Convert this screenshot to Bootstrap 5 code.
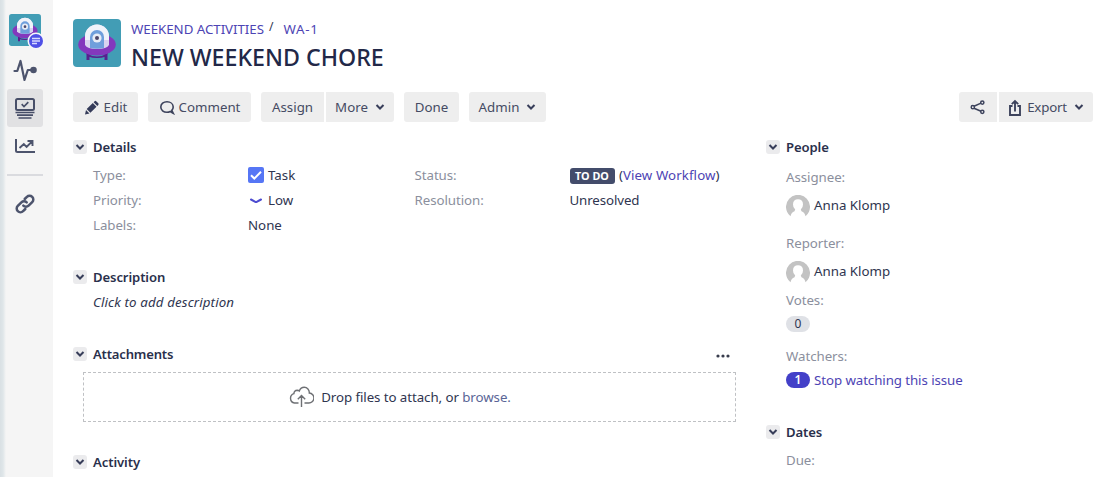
<!DOCTYPE html>
<html lang="en">
<head>
<meta charset="utf-8">
<title>WA-1 New weekend chore</title>
<link href="https://cdn.jsdelivr.net/npm/bootstrap@5.3.0/dist/css/bootstrap.min.css" rel="stylesheet">
<style>
body{font-family:"Noto Sans","Open Sans",sans-serif;font-size:13.3px;line-height:20px;color:#2f3550;height:477px;overflow:hidden;background:#fff}
a{color:#4d44b4;text-decoration:none}
svg{display:block;flex:none}
.side{width:53px;height:477px;flex:none;padding:14px 10px 0 7px;background:linear-gradient(90deg,#d9e0e4 0,#dfe6e9 3px,#f5f5f5 6px)}
.side-item{height:38px;width:36px}
.side-item.on{background:#e1e1e3;border-radius:3px}
.side-rule{height:2px;width:36px;background:#dadbdf}
.main-area{padding:19px 1px 0 20px;min-width:0}
.crumbs{font-size:13.3px;height:20px;white-space:pre}
.issue-title{font-size:23.2px;font-weight:500;line-height:30px;margin:3px 0 0;color:#222848}
.tool{--bs-btn-bg:#eee;--bs-btn-color:#454b63;--bs-btn-border-width:0;--bs-btn-padding-x:0;--bs-btn-padding-y:0;--bs-btn-font-size:13.3px;--bs-btn-border-radius:3px;height:30px;display:flex;align-items:center;justify-content:center;line-height:20px;white-space:nowrap}
.tools{margin-top:20px;gap:10px}
.btn-group{gap:2px}
.btn-group>.btn.tool{flex:none}
.sec{font-size:13.1px;font-weight:600;line-height:20px;height:20px;margin:0;gap:6px;color:#2a304c;letter-spacing:-.1px}
.chev{width:14px;height:14px;border-radius:3px;background:#ebebed}
.lbl{color:#8b8f9d;letter-spacing:-.06px}
.left-col{width:663px;flex:none}
.facts{display:grid;grid-template-columns:155px 166.5px 155px 1fr;grid-auto-rows:25px;align-items:center;margin:5px 0 0 20px}
.status{background:#434c6b;color:#fff;border-radius:3px;font-size:10.8px;font-weight:700;line-height:16px;width:45px;text-align:center;display:inline-block;margin-right:1px}
.drop{border:1px dashed #bfc1c4;height:50px;margin:8px 0 0 10px;padding-right:19px}
.right-col{margin-left:30px}
.right-body{padding-left:20px}
.count{width:24px;height:16px;border-radius:8px;background:#dfe1e6;font-size:12px;line-height:16px;text-align:center}
.count.mine{background:#4340c8;color:#fff;font-weight:600}
</style>
</head>
<body>
<svg width="0" height="0" class="position-absolute">
<defs>
<symbol id="ufo" viewBox="0 0 48 48">
<rect width="48" height="48" rx="4" fill="#429db5"/>
<path d="M13.500 33h3v8h-3zM31.500 33h3v8h-3z" fill="#57208f"/>
<path d="M13 34q11 7 22 0l-2 3.500q-9 3-18 0z" fill="#57208f"/>
<ellipse cx="24" cy="25.500" rx="18.800" ry="11" fill="#8338bd"/>
<path d="M12 26V17.500a12 12 0 0 1 24 0V26q-2 4-12 4t-12-4z" fill="#d9d3f0"/>
<path d="M12 21V17.500a12 12 0 0 1 24 0V21z" fill="#f0f3fa"/>
<path d="M17 29V18a7 7 0 0 1 14 0v11q-7 1.500-14 0z" fill="#6f9fdc"/>
<circle cx="24" cy="19" r="4.600" fill="#e8edf6"/><circle cx="24" cy="19" r="2" fill="#4d4668"/>
</symbol>
<symbol id="down" viewBox="0 0 10 8"><path d="M1.500 2 5 5.500 8.500 2" fill="none" stroke="#383e5a" stroke-width="2"/></symbol>
<symbol id="person" viewBox="0 0 24 24">
<path d="M4.500 21.200A12 12 0 1 1 19.500 21.200Q18.700 17.300 15.500 16.200L14.800 14.600Q17 12.800 17 9.400C17 6 15 4.300 12 4.300S7 6 7 9.400Q7 12.800 9.200 14.600L8.500 16.200Q5.300 17.300 4.500 21.200z" fill="#c3c3c3"/>
</symbol>
</defs>
</svg>
<div class="d-flex">
<nav class="side">
<div class="position-relative" style="height:37px">
<svg width="32" height="32" style="margin-left:2px"><use href="#ufo"/></svg>
<svg class="position-absolute" style="left:20px;top:18px" width="18" height="18" viewBox="0 0 18 18"><circle cx="9" cy="9" r="8.500" fill="#f7f7fa"/><circle cx="9" cy="9" r="7" fill="#4f50e6"/><path d="M5 6.500h8M5 9h8M5 11.500h5" stroke="#d9daff" stroke-width="1.400"/></svg>
</div>
<div class="side-item d-flex align-items-center justify-content-center"><svg width="24" height="24" viewBox="0 0 24 24" fill="none" stroke="#4d546d" stroke-width="2.200" stroke-linecap="round" stroke-linejoin="round"><path d="M1.500 13h2.800L7.500 3l4 19 3.300-10H21"/><circle cx="20.500" cy="12" r="2.200" fill="#4d546d"/></svg></div>
<div class="side-item on d-flex align-items-center justify-content-center"><svg width="22" height="22" viewBox="0 0 22 22" fill="none" stroke="#474e68" stroke-width="2"><rect x="2" y="2" width="18" height="11" rx="1.500"/><path d="m7.700 7.200 2.300 2.300 4.300-4.300" stroke-width="1.700"/><path d="M1.500 15.500h19M3 18.200h16M4.500 21h13" stroke-width="1.700"/></svg></div>
<div class="side-item d-flex align-items-center justify-content-center"><svg width="22" height="18" viewBox="0 0 22 18" fill="none" stroke="#4d546d" stroke-width="2"><path d="M2 2v11.500q0 1.500 1.500 1.500H21"/><path d="m5.500 11 4.300-4 2.800 3 5.400-5.500M13.500 4h5v5" stroke-width="1.900"/></svg></div>
<div class="side-rule" style="margin-top:9px"></div>
<div class="d-flex justify-content-center" style="margin-top:18px"><svg width="20" height="20" viewBox="0 0 20 20" fill="none" stroke="#4d546d" stroke-width="2.500" stroke-linecap="round"><path d="M8.300 11.700a3.700 3.700 0 0 0 5.300 0l3.600-3.600a3.700 3.700 0 0 0-5.300-5.300L9.700 5"/><path d="M11.700 8.300a3.700 3.700 0 0 0-5.300 0l-3.600 3.600a3.700 3.700 0 0 0 5.300 5.300l2.200-2.200"/></svg></div>
</nav>

<main class="main-area flex-grow-1">
<header class="d-flex">
<svg width="48" height="48"><use href="#ufo"/></svg>
<div style="margin-left:10px">
<div class="crumbs d-flex"><a href="#" style="letter-spacing:-.04px">WEEKEND ACTIVITIES</a><span style="margin:-2px 10px 0 5px;font-size:12px">/</span><a href="#" style="letter-spacing:.7px">WA-1</a></div>
<h1 class="issue-title">NEW WEEKEND CHORE</h1>
</div>
</header>

<div class="tools d-flex">
<button class="btn tool" style="width:65px"><svg style="margin-right:5px" width="15" height="15" viewBox="0 0 15 15" fill="#343b59"><path d="m1 14.500 1-4.500 3.500 3.500zM2.700 9.100 8.800 3l3.700 3.700-6.100 6.100zM9.600 2.200l1-1q.8-.7 1.600 0l2.100 2.100q.7.800 0 1.600l-1 1z"/></svg>Edit</button>
<button class="btn tool" style="width:103px"><svg class="me-1" width="16" height="16" viewBox="0 0 16 16" fill="none" stroke="#3d435c" stroke-width="1.600"><path d="M14.200 14.200 11.200 12.500Q9.700 13.300 8 13.300C4.500 13.300 1.800 11.100 1.800 8S4.500 2.800 8 2.800s6.200 2.200 6.200 5.200q0 1.900-1.400 3.400z"/></svg>Comment</button>
<div class="btn-group"><button class="btn tool" style="width:63px">Assign</button><button class="btn tool ms-0" style="width:68px">More<svg style="margin-left:7px" width="10" height="8"><use href="#down"/></svg></button></div>
<button class="btn tool" style="width:55px">Done</button>
<button class="btn tool" style="width:77px">Admin<svg style="margin-left:7px" width="10" height="8"><use href="#down"/></svg></button>
<div class="btn-group ms-auto"><button class="btn tool" style="width:38px" aria-label="Share"><svg width="16" height="16" viewBox="0 0 16 16" fill="none" stroke="#3d435c" stroke-width="1.500"><path d="m4 7.300 7-3.200M4 9.200l7 3"/><circle cx="2.800" cy="8.200" r="1.600"/><circle cx="12.300" cy="3.600" r="1.600"/><circle cx="12.300" cy="12.800" r="1.600"/></svg></button><button class="btn tool ms-0" style="width:94px"><svg style="margin-right:5px" width="14" height="17" viewBox="0 0 14 17" fill="none" stroke="#3d435c" stroke-width="1.900"><path d="M4.500 7H2v9h10V7H9.500M7 12.500V2.500M3.800 5.200 7 2l3.200 3.200"/></svg><span style="letter-spacing:-.2px">Export</span><svg style="margin-left:7px" width="10" height="8"><use href="#down"/></svg></button></div>
</div>

<div class="d-flex" style="margin-top:15px">
<section class="left-col">
<h2 class="sec d-flex align-items-center"><span class="chev d-flex align-items-center justify-content-center"><svg width="10" height="8"><use href="#down"/></svg></span><span>Details</span></h2>
<div class="facts">
<span class="lbl">Type:</span><span class="d-flex align-items-center"><svg class="me-1" width="16" height="16" viewBox="0 0 16 16"><rect width="16" height="16" rx="2" fill="#5676f5"/><path d="m3 8.200 3.300 3.300L13 4.800" fill="none" stroke="#fff" stroke-width="2"/></svg>Task</span>
<span class="lbl">Status:</span><span><span class="status">TO DO</span> (<a href="#" style="letter-spacing:.08px">View Workflow</a>)</span>
<span class="lbl">Priority:</span><span class="d-flex align-items-center"><svg class="me-1" width="16" height="16" viewBox="0 0 16 16"><path d="M3 7.500 7.300 9.800q.7.400 1.400 0L13 7.500" fill="none" stroke="#4c4bd0" stroke-width="2" stroke-linecap="round"/></svg>Low</span>
<span class="lbl">Resolution:</span><span style="letter-spacing:-.1px">Unresolved</span>
<span class="lbl">Labels:</span><span>None</span>
</div>
<h2 class="sec d-flex align-items-center" style="margin-top:30px"><span class="chev d-flex align-items-center justify-content-center"><svg width="10" height="8"><use href="#down"/></svg></span><span>Description</span></h2>
<div class="fst-italic" style="margin:5px 0 0 20px;letter-spacing:.13px">Click to add description</div>
<h2 class="sec d-flex align-items-center" style="margin-top:32px"><span class="chev d-flex align-items-center justify-content-center"><svg width="10" height="8"><use href="#down"/></svg></span><span style="letter-spacing:-.2px">Attachments</span><svg class="ms-auto" style="margin-right:6px;margin-top:4px" width="14" height="4" viewBox="0 0 14 4" fill="#383c4c"><circle cx="2" cy="2" r="1.600"/><circle cx="7" cy="2" r="1.600"/><circle cx="12" cy="2" r="1.600"/></svg></h2>
<div class="drop d-flex align-items-center justify-content-center"><svg style="margin-right:7px" width="25" height="22" viewBox="0 0 25 22" fill="none" stroke="#6e7074" stroke-width="1.400"><path d="M9.500 17H5.500a4.800 4.800 0 0 1-.6-9.300Q5 4.500 8.300 4.300q1.300 0 2 .7C11.500 2 13 1.300 15.200 1.300c3 0 5.300 2.400 5.100 5.700A5 5 0 0 1 19.500 17H15.500M12.500 21V9.500M8.800 13.200l3.700-3.700 3.700 3.700"/></svg><span style="letter-spacing:-.07px">Drop files to attach, or <a href="#" style="color:#5a6596">browse.</a></span></div>
<h2 class="sec d-flex align-items-center" style="margin-top:30px"><span class="chev d-flex align-items-center justify-content-center"><svg width="10" height="8"><use href="#down"/></svg></span><span>Activity</span></h2>
</section>

<aside class="right-col flex-grow-1">
<h2 class="sec d-flex align-items-center"><span class="chev d-flex align-items-center justify-content-center"><svg width="10" height="8"><use href="#down"/></svg></span><span>People</span></h2>
<div class="right-body">
<div class="lbl" style="margin-top:10px">Assignee:</div>
<div class="d-flex" style="margin-top:8px;height:38px;gap:4px"><svg width="24" height="24"><use href="#person"/></svg><span>Anna Klomp</span></div>
<div class="lbl">Reporter:</div>
<div class="d-flex" style="margin-top:8px;height:29px;gap:4px"><svg width="24" height="24"><use href="#person"/></svg><span>Anna Klomp</span></div>
<div class="lbl">Votes:</div>
<div class="count" style="margin-top:6px">0</div>
<div class="lbl" style="margin-top:14px">Watchers:</div>
<div class="d-flex align-items-center" style="margin-top:4px;gap:4px"><span class="count mine">1</span><a href="#" style="letter-spacing:-.08px">Stop watching this issue</a></div>
</div>
<h2 class="sec d-flex align-items-center" style="margin-top:32px"><span class="chev d-flex align-items-center justify-content-center"><svg width="10" height="8"><use href="#down"/></svg></span><span>Dates</span></h2>
<div class="right-body lbl" style="margin-top:8px">Due:</div>
</aside>
</div>
</main>
</div>
<script src="https://cdn.jsdelivr.net/npm/bootstrap@5.3.0/dist/js/bootstrap.bundle.min.js"></script>
</body>
</html>
